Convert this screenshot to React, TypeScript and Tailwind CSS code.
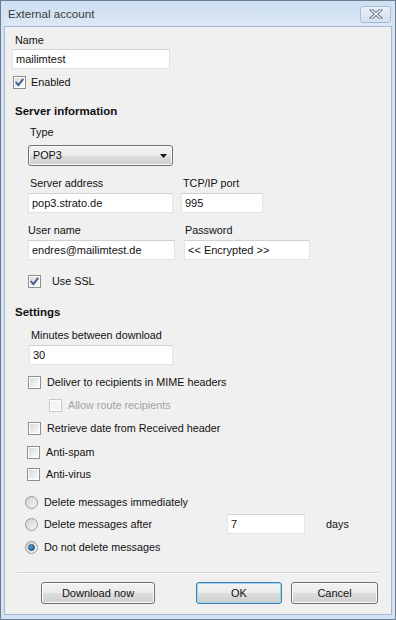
import React from 'react';

const font = { fontFamily: '"Liberation Sans", Arial, sans-serif' };

function CheckBox({ checked = false, disabled = false }: { checked?: boolean; disabled?: boolean }) {
  return (
    <span
      className={`relative flex h-[13px] w-[13px] shrink-0 items-center justify-center border ${
        disabled ? 'border-[#c8c8c8]' : 'border-[#8e8f8f]'
      } bg-white`}
    >
      <span
        className={`absolute inset-[1px] ${
          disabled ? 'bg-[#f4f4f4]' : 'bg-gradient-to-br from-[#dadada] to-[#fbfbfb]'
        }`}
      />
      {checked && (
        <svg viewBox="0 0 11 11" className="relative h-[11px] w-[11px]">
          <path d="M2.2 5.6 L4.4 8.2 L8.8 2.4" fill="none" stroke="#40598e" strokeWidth="1.9" strokeLinecap="round" strokeLinejoin="round" />
        </svg>
      )}
    </span>
  );
}

function Radio({ checked = false }: { checked?: boolean }) {
  return (
    <span className="flex h-[13px] w-[13px] shrink-0 items-center justify-center rounded-full border border-[#9a9a9a] bg-gradient-to-br from-[#d0d0d0] to-[#f8f8f8]">
      {checked && (
        <span className="h-[7px] w-[7px] rounded-full border border-[#1c4c78] bg-gradient-to-br from-[#6fb4e4] to-[#17578f]" />
      )}
    </span>
  );
}

function TextBox({ value, className = '' }: { value: string; className?: string }) {
  return (
    <div
      className={`flex h-[20px] items-center border border-[#e2e3e6] border-t-[#d0d1d4] bg-white pl-[3px] text-[11px] text-[#111] ${className}`}
    >
      {value}
    </div>
  );
}

function Button({ label, primary = false, className = '' }: { label: string; primary?: boolean; className?: string }) {
  return (
    <div
      className={`flex h-[22px] items-center justify-center rounded-[3px] border ${
        primary ? 'border-[#3c7fb1] shadow-[inset_0_0_0_1px_#9fd6f2]' : 'border-[#707070] shadow-[inset_0_0_0_1px_#fbfbfb]'
      } bg-[linear-gradient(#f2f2f2_0%,#ebebeb_50%,#dddddd_51%,#cfcfcf_100%)] text-[11px] text-[#111] ${className}`}
    >
      {label}
    </div>
  );
}

function CheckRow({ label, checked, disabled, gap = 'gap-[6px]', className = '' }: { label: string; checked?: boolean; disabled?: boolean; gap?: string; className?: string }) {
  return (
    <div className={`flex h-[13px] items-center ${gap} ${className}`}>
      <CheckBox checked={checked} disabled={disabled} />
      <span className={`leading-[13px] ${disabled ? 'text-[#a3a3a3]' : 'text-[#111]'}`}>{label}</span>
    </div>
  );
}

export default function App() {
  return (
    <div style={font} className="flex h-[620px] w-[396px] flex-col border border-[#6e7d90] bg-[#d4e3f3] px-[3px] pb-[4px]">
      {/* Title bar */}
      <div className="flex h-[25px] shrink-0 items-center justify-between bg-gradient-to-b from-[#cddef0] to-[#dce8f5] pl-[4px] pr-[1px]">
        <span className="text-[11.6px] text-[#3a3a3a]">External account</span>
        <div className="mt-[1px] flex h-[17px] w-[31px] items-center justify-center rounded-[3px] border border-[#a9bbd0] bg-gradient-to-b from-[#e8eff8] to-[#d3e0ee]">
          <svg viewBox="0 0 14 10" className="h-[10px] w-[14px]">
            <path d="M2.5 1 L11.5 9 M11.5 1 L2.5 9" stroke="#66717f" strokeWidth="3.2" strokeLinecap="square" />
            <path d="M2.5 1 L11.5 9 M11.5 1 L2.5 9" stroke="#f4f7fb" strokeWidth="1.4" strokeLinecap="square" />
          </svg>
        </div>
      </div>

      {/* Content */}
      <div className="flex flex-1 flex-col border border-[#a6b8cd] bg-[#f0f0f0] text-[10.8px] leading-[13px] text-[#111]">
        <div className="ml-[10px] mt-[7px]">Name</div>
        <TextBox value="mailimtest" className="ml-[7px] mt-[2px] w-[158px]" />
        <CheckRow label="Enabled" checked className="ml-[8px] mt-[7px]" gap="gap-[5px]" />

        <div className="ml-[10px] mt-[15px] text-[11.5px] font-bold leading-[14px]">Server information</div>
        <div className="ml-[25px] mt-[8px]">Type</div>
        <div className="ml-[23px] mt-[6px] flex h-[21px] w-[145px] items-center justify-between rounded-[3px] border border-[#707070] bg-[linear-gradient(#f2f2f2_0%,#ebebeb_50%,#dddddd_51%,#cfcfcf_100%)] pl-[4px] pr-[5px] shadow-[inset_0_0_0_1px_#fbfbfb]">
          <span>POP3</span>
          <svg viewBox="0 0 7 4" className="h-[4px] w-[7px]">
            <path d="M0 0 H7 L3.5 4 Z" fill="#111" />
          </svg>
        </div>

        <div className="mt-[11px] flex">
          <span className="ml-[25px] w-[153px]">Server address</span>
          <span>TCP/IP port</span>
        </div>
        <div className="mt-[3px] flex">
          <TextBox value="pop3.strato.de" className="ml-[23px] w-[145px]" />
          <TextBox value="995" className="ml-[8px] w-[82px]" />
        </div>

        <div className="mt-[11px] flex">
          <span className="ml-[23px] w-[157px]">User name</span>
          <span>Password</span>
        </div>
        <div className="mt-[3px] flex">
          <TextBox value="endres@mailimtest.de" className="ml-[23px] w-[147px]" />
          <TextBox value="<< Encrypted >>" className="ml-[9px] w-[126px]" />
        </div>

        <CheckRow label="Use SSL" checked className="ml-[23px] mt-[15px]" gap="gap-[11px]" />

        <div className="ml-[10px] mt-[17px] text-[11.5px] font-bold leading-[14px]">Settings</div>
        <div className="ml-[26px] mt-[10px]">Minutes between download</div>
        <TextBox value="30" className="ml-[24px] mt-[3px] w-[144px]" />

        <CheckRow label="Deliver to recipients in MIME headers" className="ml-[23px] mt-[11px]" />
        <CheckRow label="Allow route recipients" disabled className="ml-[44px] mt-[10px]" />
        <CheckRow label="Retrieve date from Received header" className="ml-[23px] mt-[10px]" />
        <CheckRow label="Anti-spam" className="ml-[22px] mt-[11px]" />
        <CheckRow label="Anti-virus" className="ml-[22px] mt-[9px]" />

        <div className="ml-[20px] mt-[15px] flex h-[13px] items-center gap-[6px]">
          <Radio />
          <span>Delete messages immediately</span>
        </div>
        <div className="ml-[20px] mt-[5px] flex h-[20px] items-center">
          <Radio />
          <span className="ml-[6px] w-[183px]">Delete messages after</span>
          <TextBox value="7" className="w-[78px]" />
          <span className="ml-[21px]">days</span>
        </div>
        <div className="ml-[20px] mt-[7px] flex h-[13px] items-center gap-[6px]">
          <Radio checked />
          <span>Do not delete messages</span>
        </div>

        <div className="ml-[12px] mt-[18px] h-[2px] w-[362px] border-t border-b border-t-[#d5d5d5] border-b-white" />

        <div className="mt-[8px] flex">
          <Button label="Download now" className="ml-[36px] w-[114px]" />
          <Button label="OK" primary className="ml-[41px] w-[86px]" />
          <Button label="Cancel" className="ml-[9px] w-[87px]" />
        </div>
      </div>
    </div>
  );
}
